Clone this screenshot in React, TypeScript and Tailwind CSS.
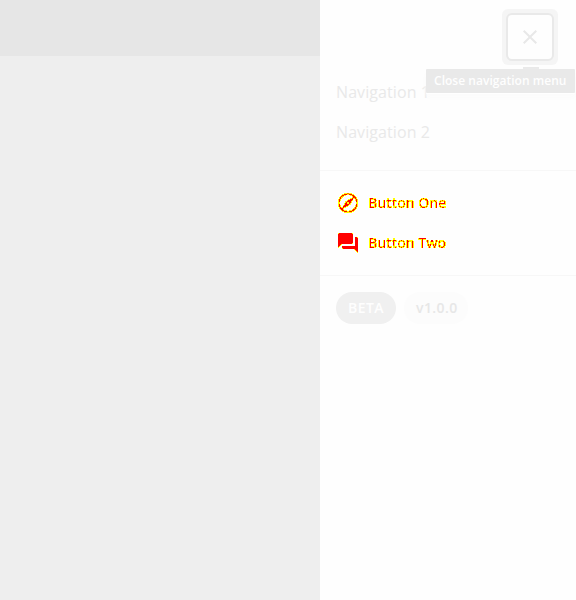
import React from "react";
import { MdClose, MdForum } from "react-icons/md";

// Paints solid pixels red and partially covered edge pixels yellow.
function EdgeHighlightFilter() {
  return (
    <svg className="absolute size-0" aria-hidden="true">
      <filter id="edge-highlight" x="0" y="0" width="100%" height="100%" colorInterpolationFilters="sRGB">
        <feColorMatrix type="matrix" values="0 0 0 0 1  0 0 0 0 0  0 0 0 0 0  0 0 0 1 0" result="shape" />
        <feComponentTransfer in="shape" result="core">
          <feFuncA type="linear" slope="60" intercept="-54" />
        </feComponentTransfer>
        <feColorMatrix in="shape" type="matrix" values="0 0 0 0 1  0 0 0 0 1  0 0 0 0 0  0 0 0 60 -3" result="edge" />
        <feMerge>
          <feMergeNode in="edge" />
          <feMergeNode in="core" />
        </feMerge>
      </filter>
    </svg>
  );
}

function CompassIcon() {
  return (
    <svg width="24" height="24" viewBox="0 0 24 24" fill="none" stroke="currentColor">
      <circle cx="12" cy="12" r="9.1" strokeWidth="1.6" />
      <path
        d="M4.8 19.2 10 10.4 19.2 4.8 14 13.6ZM12 10.9a1.1 1.1 0 1 0 0 2.2 1.1 1.1 0 0 0 0-2.2Z"
        fill="currentColor"
        fillRule="evenodd"
        stroke="none"
      />
    </svg>
  );
}

function ActionButton({ icon, label }: { icon: React.ReactNode; label: string }) {
  return (
    <button className="flex h-10 w-full items-center gap-2 text-left text-sm font-semibold text-black [filter:url(#edge-highlight)]">
      {icon}
      <span>{label}</span>
    </button>
  );
}

export default function App() {
  return (
    <div className="flex h-[600px] w-[576px] overflow-hidden bg-[#eee] font-['Open_Sans','Noto_Sans',sans-serif]">
      <EdgeHighlightFilter />
      <main className="w-80 shrink-0">
        <header className="h-14 bg-[#e6e6e6]" />
      </main>
      <aside className="flex flex-1 flex-col bg-[#fefefe]">
        <div className="flex h-[72px] shrink-0 justify-end pt-[9px] pr-[18px]">
          <div className="relative size-14 rounded-md bg-[#f5f5f5] p-1">
            <button
              aria-label="Close navigation menu"
              className="flex size-12 items-center justify-center rounded-md border-2 border-[#e9e9e9] bg-[#fefefe] text-[#e8e8e8]"
            >
              <MdClose size={24} />
            </button>
            <div className="absolute top-[58px] left-[21px] h-0.5 w-4 bg-[#e9e9e9]" />
            <div className="absolute top-[60px] -left-[76px] h-6 w-[149px] rounded-[1px] bg-[#e9e9e9] pl-2 text-xs leading-6 font-semibold tracking-[0.03px] whitespace-nowrap text-[#fefefe] shadow-[0_1px_0_#fff,0_4px_6px_#fbfbfb]">
              Close navigation menu
            </div>
          </div>
        </div>
        <nav className="flex h-[98px] shrink-0 flex-col px-4 text-base tracking-[0.08px] text-[#e9e9e9]">
          <a className="h-10 leading-10">Navigation 1</a>
          <a className="h-10 leading-10">Navigation 2</a>
        </nav>
        <section className="h-[105px] shrink-0 border-t border-[#f7f7f7] px-4 pt-3">
          <ActionButton icon={<CompassIcon />} label="Button One" />
          <ActionButton icon={<MdForum size={24} />} label="Button Two" />
        </section>
        <footer className="flex gap-2 border-t border-[#f7f7f7] px-4 pt-4 text-sm font-semibold tracking-[0.4px]">
          <span className="flex h-8 w-[60px] items-center justify-center rounded-full bg-[#f0f0f0] text-[#fefefe]">BETA</span>
          <span className="flex h-8 w-16 items-center rounded-full bg-[#fcfcfc] pl-3 text-[#e7e7e7]">v1.0.0</span>
        </footer>
      </aside>
    </div>
  );
}
